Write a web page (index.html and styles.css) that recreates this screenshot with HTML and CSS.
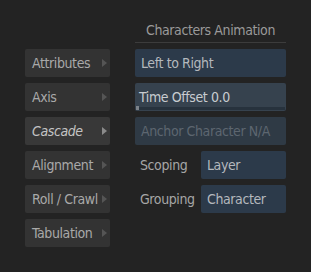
FILE: index.html
```html
<!DOCTYPE html>
<html lang="en">
  <head>
    <meta charset="UTF-8" />
    <title>Characters Animation</title>
    <link rel="stylesheet" href="styles.css">
  </head>
  <body>
    <div class="panel">
      <!-- Left menu -->
      <nav class="menu">
        <div class="menu-item">Attributes<span class="arrow"></span></div>
        <div class="menu-item">Axis<span class="arrow"></span></div>
        <div class="menu-item active">Cascade<span class="arrow"></span></div>
        <div class="menu-item">Alignment<span class="arrow"></span></div>
        <div class="menu-item">Roll / Crawl<span class="arrow"></span></div>
        <div class="menu-item">Tabulation<span class="arrow"></span></div>
      </nav>

      <!-- Right settings -->
      <section class="settings">
        <h2>Characters Animation</h2>
        <div class="field">Left to Right</div>
        <div class="field slider">
          <span>Time Offset 0.0</span>
          <div class="track"><div class="thumb"></div></div>
        </div>
        <div class="field disabled">Anchor Character N/A</div>
        <div class="row">
          <span class="label">Scoping</span>
          <div class="field">Layer</div>
        </div>
        <div class="row">
          <span class="label">Grouping</span>
          <div class="field">Character</div>
        </div>
      </section>
    </div>
  </body>
</html>
```

FILE: styles.css
```css
body {
  margin: 0;
  background-color: #232323;
  font-family: "DejaVu Sans", sans-serif;
  font-stretch: condensed;
  font-size: 14px;
  letter-spacing: -0.4px;
  color: #a9a9a9;
  width: 311px;
  height: 272px;
}

.panel {
  display: flex;
  gap: 25px;
  padding: 15px 25px 0 25px;
}

.menu {
  display: flex;
  flex-direction: column;
  gap: 6px;
  width: 85px;
  margin-top: 34px;
}

.menu-item {
  display: flex;
  align-items: center;
  justify-content: space-between;
  height: 28px;
  padding: 0 3px 0 7px;
  background-color: #333333;
  border-radius: 2px;
  box-sizing: border-box;
}

.menu-item.active {
  font-style: italic;
  color: #c4c4c4;
  background-color: #383838;
}

.arrow {
  width: 0;
  height: 0;
  border-top: 4.5px solid transparent;
  border-bottom: 4.5px solid transparent;
  border-left: 5px solid #555555;
}

.active .arrow {
  border-left-color: #8a8a8a;
}

.settings {
  display: flex;
  flex-direction: column;
  gap: 6px;
  width: 151px;
}

h2 {
  margin: 0;
  height: 20px;
  padding-top: 7px;
  font-size: 14px;
  line-height: 16px;
  font-weight: normal;
  text-align: center;
  color: #9a9a9a;
  border-bottom: 1px solid #3c3c3c;
}

.field {
  display: flex;
  align-items: center;
  height: 28px;
  padding: 0 6px;
  background-color: #2c3a4a;
  color: #b4b8bd;
  border-radius: 2px;
  box-sizing: border-box;
}

.field.slider {
  position: relative;
  background-color: #36424e;
  color: #c8ccd0;
  padding-left: 4px;
}

.track {
  position: absolute;
  left: 1px;
  right: 1px;
  bottom: 1px;
  height: 3px;
  background-color: #27323d;
}

.thumb {
  width: 3px;
  height: 4px;
  margin-top: -1px;
  background-color: #7c8288;
}

.field.disabled {
  background-color: #2f3a45;
  color: #5d6670;
}

.row {
  display: flex;
  align-items: center;
}

.label {
  width: 66px;
  padding-left: 5px;
  box-sizing: border-box;
  color: #a6a6a6;
}

.row .field {
  flex: 1;
}
```
